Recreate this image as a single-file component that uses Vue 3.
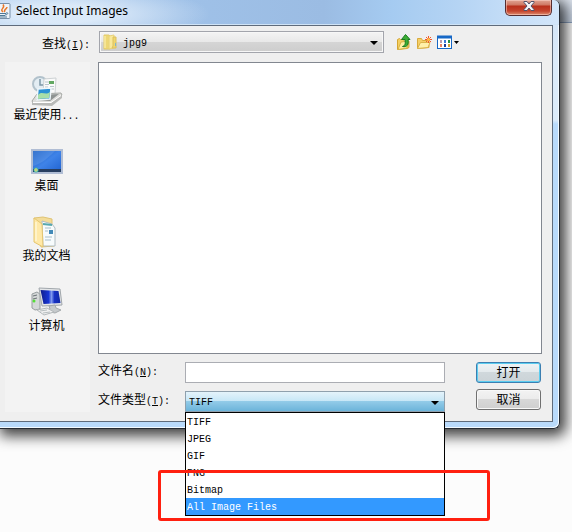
<template>
  <div class="backdrop">
    <div class="backdrop-bar"></div>
    <section class="dialog" aria-labelledby="dialog-title">
      <header class="titlebar">
        <svg class="java-icon" viewBox="0 0 12 16" aria-hidden="true">
          <rect x="-5" y="0.5" width="15" height="15" rx="1" fill="#eef4fa" stroke="#7890a8" />
          <path d="M3 9C-1 6 6 5 3 1.500M5 9C3 7 7 6 7 4" fill="none" stroke="#e8782a" stroke-width="1.500" />
          <path d="M0 10.500h6M0 12.500h5M6 10c3-1 2 2-1 2M0 14h7" fill="none" stroke="#4e7896" />
        </svg>
        <h1 id="dialog-title">Select Input Images</h1>
        <button class="close" type="button" aria-label="Close">
          <svg viewBox="0 0 14 12" aria-hidden="true">
            <path d="M2 1.500h3l2 2.500 2-2.500h3v1l-3 3.500 3 3.500v1H9L7 8l-2 2.500H2v-1L5 6 2 2.500z" fill="#f4f4f6" stroke="#53536b" />
          </svg>
        </button>
      </header>

      <form class="content" @submit.prevent>
        <div class="look-in">
          <label for="folder">查找<span class="latin">(<u>I</u>):</span></label>
          <div class="combo folder-combo">
            <svg class="folder-icon" viewBox="0 0 16 18" aria-hidden="true">
              <path d="M1 2h5l1 1v13H1z" fill="#edd775" stroke="#e3cb6c" />
              <path d="M6 3l5-1v13l-5 1z" fill="#f9e99b" stroke="#e8d27a" />
              <path d="M10 4h3v11H9l1-2z" fill="#efd66f" stroke="#dcc05c" />
              <path d="M2 3v12" stroke="#fff4b8" />
              <path d="M12.500 10v3" stroke="#80b5c9" />
            </svg>
            <select id="folder" class="latin">
              <option>jpg9</option>
            </select>
            <span class="arrow"></span>
          </div>
          <div class="tools">
            <button type="button" aria-label="Up one level">
              <svg width="16" height="17" viewBox="0 0 16 17" aria-hidden="true">
                <path d="M1.500 15.500v-10l2-1 1 1H8v2h5v6l-2 1z" fill="#f4cf62" stroke="#d4a633" />
                <path d="M2 15.500l3-7.500 8-1-2 7z" fill="#fff0a4" stroke="#dab345" />
                <path d="M6.500 12.500c3-1 3-3 2.500-7H5.500L9.500 0.500l4.500 5h-2c1 5-1 8-5.500 7z" fill="#3cad35" stroke="#187a20" />
              </svg>
            </button>
            <button type="button" aria-label="New folder">
              <svg width="17" height="17" viewBox="0 0 17 17" aria-hidden="true">
                <path d="M1.500 14.500v-10h4l1 2H13v7z" fill="#f5cf67" stroke="#d8aa3c" />
                <path d="M1.500 14.500l3-6H14l-2 5z" fill="#fff0aa" stroke="#dcb34c" />
                <path d="M12.500 2v7M9 5.500h7M10 3l5 5M15 3l-5 5" stroke="#f2562f" />
                <circle cx="12.500" cy="5.500" r="1.500" fill="#ffc144" />
              </svg>
            </button>
            <button type="button" aria-label="View menu">
              <svg width="23" height="17" viewBox="0 0 23 17" aria-hidden="true">
                <rect x="0.500" y="2.500" width="14" height="12" fill="#fff" stroke="#1768c6" />
                <path d="M0 3h15" stroke="#1768c6" stroke-width="3" />
                <path d="M3 6h2v3H3z" fill="#b79bb0" />
                <path d="M7 6h2v3H7z" fill="#3d78d8" />
                <path d="M11 6h2v3h-2z" fill="#278d43" />
                <path d="M3 10h2v3H3z" fill="#ee8460" />
                <path d="M7 10h2v3H7z" fill="#1c3b94" />
                <path d="M11 10h2v3h-2z" fill="#d3a132" />
                <path d="M17 7h5l-2.500 3z" fill="#000" />
              </svg>
            </button>
          </div>
        </div>

        <div class="body">
          <nav class="places">
            <button type="button">
              <svg viewBox="0 0 32 32" aria-hidden="true">
                <circle cx="9" cy="9" r="7" fill="#e3edf3" stroke="#b2c2cc" stroke-width="2" />
                <path d="M9 4v6h4" fill="none" stroke="#7d97a6" stroke-width="1.500" />
                <path d="M13 4l12-1-1 16H12z" fill="#fafafa" stroke="#cdd2d4" />
                <path d="M14 7h4M14 9.500h4M14 12h3M19 11.500h4M19 14h4" stroke="#b9c4cc" />
                <path d="M18 6h5v3h-5z" fill="#62a862" />
                <path d="M1 26l5-7 24-1 1 2-11 9-18-1z" fill="#dededb" stroke="#a4a7a4" />
                <path d="M5 25l4-5 19-1-9 7z" fill="#8e9392" />
                <path d="M7 14l13-1-1 11-13 1z" fill="#2b91d4" stroke="#eef6fa" stroke-width="1.500" />
                <path d="M7 20c4-5 7 1 12-3l-1 6-11 1z" fill="#a8dfa8" />
                <path d="M1 27l19 1 11-8v3l-10 8-20-1z" fill="#b9bab8" />
                <path d="M2 27.500h18l10-7" fill="none" stroke="#fff" />
              </svg>
              <span>最近使用<span class="latin">...</span></span>
            </button>
            <button type="button">
              <svg viewBox="0 0 32 32" aria-hidden="true">
                <defs>
                  <linearGradient id="desk" x1="0" y1="0" x2="1" y2="1">
                    <stop offset="0" stop-color="#1456b9" />
                    <stop offset="0.500" stop-color="#3f83e8" />
                    <stop offset="1" stop-color="#1d60cf" />
                  </linearGradient>
                </defs>
                <rect x="1" y="4" width="30" height="23" fill="url(#desk)" stroke="#b0bdd4" stroke-width="2" />
                <path d="M2 15V5h22C15 14 9 18 2 20z" fill="#73a7ee" opacity="0.350" />
                <path d="M2 23h28v3H2z" fill="#273e60" />
                <circle cx="5" cy="24" r="2.500" fill="#36b1ad" />
                <path d="M5 22v4M3 24h4" stroke="#eedd72" />
              </svg>
              <span>桌面</span>
            </button>
            <button type="button">
              <svg viewBox="0 0 32 32" aria-hidden="true">
                <path d="M3 2l9-1 9 2v5l2 22-13 1z" fill="#f3dc98" stroke="#dfc374" />
                <path d="M11 5l10 3 3 4v18H12z" fill="#f7fbfc" stroke="#b0bcc2" />
                <path d="M12 8l9 1" stroke="#56a8af" stroke-width="2" />
                <path d="M14 12h6M14 15h3M14 21h7M14 24h6" stroke="#a7bfcc" />
                <path d="M18 14h4v4h-4z" fill="#4289b7" />
                <path d="M3 2l8 6 1 23-9-5z" fill="#ffe9a8" stroke="#e5c66f" />
                <path d="M5 6v19" stroke="#fff3c8" stroke-width="2" />
              </svg>
              <span>我的文档</span>
            </button>
            <button type="button">
              <svg viewBox="0 0 32 32" aria-hidden="true">
                <defs>
                  <linearGradient id="screen">
                    <stop offset="0" stop-color="#101e8a" />
                    <stop offset="0.400" stop-color="#1735d4" />
                    <stop offset="0.550" stop-color="#8099ee" />
                    <stop offset="0.700" stop-color="#1731c4" />
                    <stop offset="1" stop-color="#1229a4" />
                  </linearGradient>
                </defs>
                <path d="M1 8l5-2 3 2v15l-5 1-3-2z" fill="#d4d7d8" stroke="#979d9f" />
                <path d="M2 10l4-1M2 13l4-1" stroke="#697174" />
                <circle cx="3" cy="15" r="1.500" fill="#54de36" />
                <path d="M8 2l21 1 2 16-20 1z" fill="#e4e6e8" stroke="#a0a6ab" />
                <path d="M9.500 4l18 1 2 12-17 1z" fill="url(#screen)" />
                <path d="M18 20l6-1 1 3 5 2-6 3-9-2 4-2z" fill="#c6cacc" stroke="#a5aaad" />
                <path d="M6 24l10-2 7 4-10 3z" fill="#f0f1f1" stroke="#b3b8ba" />
                <path d="M9 25l7-1M12 27l7-1" stroke="#b8bec0" />
              </svg>
              <span>计算机</span>
            </button>
          </nav>

          <div class="main">
            <div class="file-list" role="listbox" aria-label="Files"></div>
            <div class="footer">
              <div class="fields">
                <label for="filename">文件名<span class="latin">(<u>N</u>):</span></label>
                <input id="filename" v-model="fileName" type="text" />
                <label for="filetype">文件类型<span class="latin">(<u>T</u>):</span></label>
                <div class="combo type-combo">
                  <select id="filetype" v-model="fileType" class="latin">
                    <option v-for="t in types" :key="t">{{ t }}</option>
                  </select>
                  <span class="arrow"></span>
                  <div class="popup">
                    <ul class="latin" role="listbox" aria-label="File types">
                      <li
                        v-for="t in types"
                        :key="t"
                        role="option"
                        :aria-selected="t === highlighted"
                        :class="{ active: t === highlighted }"
                        @mouseenter="highlighted = t"
                        @click="fileType = t"
                      >{{ t }}</li>
                    </ul>
                    <div class="marker"></div>
                  </div>
                </div>
              </div>
              <div class="actions">
                <button class="btn primary" type="submit">打开</button>
                <button class="btn" type="button">取消</button>
              </div>
            </div>
          </div>
        </div>
      </form>
    </section>
  </div>
</template>

<script setup>
import { ref } from 'vue';

const types = ['TIFF', 'JPEG', 'GIF', 'PNG', 'Bitmap', 'All Image Files'];
const fileName = ref('');
const fileType = ref('TIFF');
const highlighted = ref('All Image Files');
</script>

<style>
body {
  margin: 0;
  background: #fcfcfc;
}
</style>

<style scoped>
* {
  box-sizing: border-box;
}
.backdrop {
  position: relative;
  min-height: 100vh;
  overflow: hidden;
  font-family: "Liberation Sans", "Noto Sans CJK SC", sans-serif;
  font-size: 12px;
  color: #000;
}
.backdrop-bar {
  position: absolute;
  top: 0;
  left: 0;
  right: 0;
  height: 23px;
  background: linear-gradient(#dde4ee, #c9d5e6);
  border-bottom: 1px solid #8fa5c4;
}
.dialog {
  position: relative;
  margin-right: 12px;
  padding: 0 6px 6px 0;
  background: linear-gradient(#cfe2f6 0, #dcebfa 60px, #dcebfa 120px, #b9dafb 124px);
  border: 1px solid #262b33;
  border-width: 0 1px 1px 0;
  border-radius: 0 6px 6px 0;
  box-shadow: inset -1px -1px 0 #f2f9ff, 3px 4px 14px 3px rgba(0, 0, 0, 0.75);
}
.titlebar {
  display: flex;
  align-items: flex-start;
  height: 25px;
  margin-right: -6px;
  padding-right: 7px;
  border-radius: 0 6px 0 0;
  background:
    radial-gradient(ellipse 150px 30px at 60px 14px, rgba(232, 242, 252, 0.8) 30%, rgba(232, 242, 252, 0) 100%),
    linear-gradient(90deg, #a9c9ec 0%, #9fc1e8 32%, #9bbce3 58%, #a5cbf1 70%, #b5d4f4 82%, #d3e6fa 100%);
  box-shadow: inset 0 -1px 0 #cfe3f6;
}
.java-icon {
  width: 12px;
  height: 16px;
  margin-top: 3px;
}
h1 {
  flex: 1;
  margin: 0 0 0 4px;
  font-family: "Noto Sans", "Open Sans", sans-serif;
  font-size: 12px;
  font-weight: 400;
  line-height: 22px;
}
.close {
  display: flex;
  align-items: center;
  justify-content: center;
  width: 47px;
  height: 16px;
  padding: 0 0 3px;
  border: 1px solid #562d30;
  border-top: 0;
  border-radius: 0 0 5px 5px;
  background: linear-gradient(#e0a594 0, #cf7863 5px, #b8301c 6px, #c5442d 11px, #dd8e70 15px);
  box-shadow: inset 0 0 0 1px rgba(255, 220, 210, 0.5);
}
.close svg {
  width: 14px;
  height: 12px;
}
.content {
  background: #efefef;
  border: 1px solid #5f6b7b;
  border-left: 0;
  padding: 5px 10px 9px 5px;
}
.latin {
  font-family: "Liberation Mono", monospace;
  font-size: 10px;
}
.look-in {
  display: flex;
  align-items: center;
  padding-left: 37px;
  margin-bottom: 9px;
}
.look-in label {
  width: 57px;
}
.combo {
  position: relative;
  height: 22px;
}
.combo select {
  display: block;
  width: 100%;
  height: 100%;
  padding: 2px 20px 0 3px;
  appearance: none;
  border: 1px solid #a3a5ac;
  border-radius: 0;
  color: #000;
  background: linear-gradient(#f4f4f4, #e8e8e8 50%, #d5d5d5 50%, #cdcdcd);
  box-shadow: inset 0 0 0 1px #f7f7f7;
}
.folder-combo {
  flex: 1;
}
.folder-combo select {
  padding-left: 23px;
}
.folder-icon {
  position: absolute;
  left: 4px;
  top: 2px;
  width: 16px;
  height: 18px;
}
.arrow {
  position: absolute;
  right: 6px;
  top: 10px;
  border: 4px solid transparent;
  border-top-color: #000;
  border-bottom: 0;
  pointer-events: none;
}
.tools {
  display: flex;
  gap: 4px;
  width: 158px;
  padding-left: 12px;
}
.tools button {
  display: flex;
  padding: 0;
  border: 0;
  background: none;
}
.body {
  display: flex;
  gap: 8px;
}
.places {
  display: flex;
  flex-direction: column;
  gap: 21px;
  width: 85px;
  padding-top: 13px;
  background: #f3f3f3;
}
.places button {
  display: flex;
  flex-direction: column;
  align-items: center;
  width: 100%;
  padding: 0 2px 0 0;
  border: 0;
  background: none;
  font-family: inherit;
  font-size: 12px;
  line-height: 17px;
  white-space: nowrap;
  color: #000;
}
.places svg {
  width: 32px;
  height: 32px;
}
.main {
  flex: 1;
  min-width: 0;
}
.file-list {
  min-height: 292px;
  background: #fff;
  border: 1px solid #828790;
}
.footer {
  display: flex;
  gap: 31px;
  margin: 8px 1px 0 0;
}
.fields {
  flex: 1;
  display: grid;
  grid-template-columns: 87px 1fr;
  row-gap: 8px;
  align-items: start;
}
.fields label {
  line-height: 18px;
}
.fields input {
  width: 100%;
  height: 21px;
  padding: 0 3px;
  border: 1px solid #abadb3;
  background: #fff;
}
.type-combo {
  height: 21px;
}
.type-combo select {
  border-color: #8fa0ad;
  background: linear-gradient(#e4f3fb, #c5e6f6 50%, #92cbe8 50%, #6cb4da);
  box-shadow: none;
}
.popup {
  position: absolute;
  z-index: 2;
  top: 100%;
  left: 0;
  right: 0;
  background: #fff;
  border: 1px solid #000;
}
.popup ul {
  margin: 0;
  padding: 0;
  list-style: none;
}
.popup li {
  padding: 2px 0 0 1px;
  line-height: 15px;
}
.popup li.active {
  background: #3399ff;
  color: #fff;
}
.marker {
  position: absolute;
  top: 57px;
  right: -46px;
  bottom: -6px;
  left: -28px;
  border: 3px solid #ff2010;
  border-radius: 3px;
  pointer-events: none;
}
.actions {
  display: flex;
  flex-direction: column;
  gap: 6px;
}
.btn {
  width: 65px;
  height: 21px;
  padding: 2px 0 0;
  border: 1px solid #707070;
  border-radius: 3px;
  font-family: inherit;
  font-size: 12px;
  line-height: 17px;
  color: #000;
  background: linear-gradient(#f3f3f3, #ebebeb 50%, #d8d8d8 50%, #cfcfcf);
  box-shadow: inset 0 0 0 1px #f8f8f8;
}
.btn.primary {
  border-color: #3c7fb1;
  background: linear-gradient(#eff3f5, #e3e9ec 50%, #d0d8dc 50%, #cbd3d7);
  box-shadow: inset 0 0 0 1px #5bcdf0;
}
</style>
